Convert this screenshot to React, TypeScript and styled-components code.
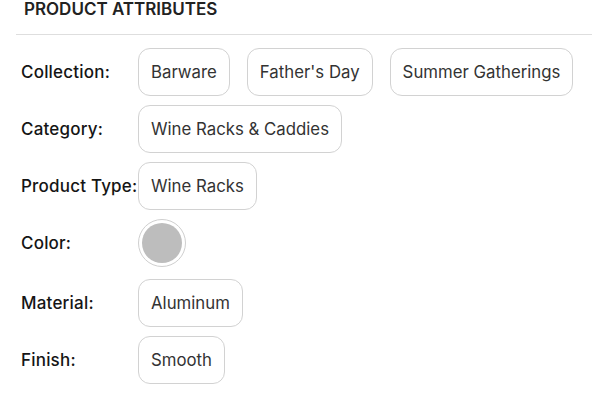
import styled, { createGlobalStyle } from "styled-components";

interface Attribute {
  label: string;
  values?: string[];
  color?: string;
}

const attributes: Attribute[] = [
  { label: "Collection:", values: ["Barware", "Father's Day", "Summer Gatherings"] },
  { label: "Category:", values: ["Wine Racks & Caddies"] },
  { label: "Product Type:", values: ["Wine Racks"] },
  { label: "Color:", color: "#bdbdbd" },
  { label: "Material:", values: ["Aluminum"] },
  { label: "Finish:", values: ["Smooth"] },
];

const GlobalStyle = createGlobalStyle`
  body {
    margin: 0;
    background: #fff;
    font-family: Inter, "Noto Sans", sans-serif;
  }
`;

const Panel = styled.section`
  padding-left: 16px;
`;

const Title = styled.h2`
  margin: 0 0 16px;
  padding-left: 8px;
  font-size: 17px;
  line-height: 18px;
  font-weight: 600;
  color: #222;
`;

const Divider = styled.hr`
  margin: 0;
  border: 0;
  border-top: 1px solid #dedede;
`;

const List = styled.div`
  display: flex;
  flex-direction: column;
  gap: 9px;
  padding-top: 13px;
`;

const Row = styled.div<{ $extra?: number }>`
  display: flex;
  align-items: center;
  margin-bottom: ${({ $extra }) => $extra ?? 0}px;
`;

const Label = styled.div`
  width: 122px;
  flex-shrink: 0;
  padding-left: 5px;
  box-sizing: border-box;
  font-size: 17px;
  font-weight: 500;
  letter-spacing: 0.2px;
  color: #151515;
  white-space: nowrap;
`;

const Chips = styled.div`
  display: flex;
  gap: 17px;
`;

const Chip = styled.span`
  display: inline-flex;
  align-items: center;
  height: 48px;
  box-sizing: border-box;
  padding: 0 12px;
  border: 1px solid #d2d2d2;
  border-radius: 12px;
  font-size: 16.8px;
  color: #333;
  white-space: nowrap;
`;

const Swatch = styled.span<{ $color: string }>`
  width: 48px;
  height: 48px;
  box-sizing: border-box;
  border: 1px solid #cfcfcf;
  border-radius: 50%;
  padding: 3px;
  display: flex;

  &::after {
    content: "";
    flex: 1;
    border-radius: 50%;
    background: ${({ $color }) => $color};
  }
`;

export default function App() {
  return (
    <>
      <GlobalStyle />
      <Panel>
        <Title>PRODUCT ATTRIBUTES</Title>
        <Divider />
        <List>
          {attributes.map((attr) => (
            <Row key={attr.label} $extra={attr.color ? 3 : 0}>
              <Label>{attr.label}</Label>
              {attr.color ? (
                <Swatch $color={attr.color} />
              ) : (
                <Chips>
                  {attr.values?.map((v) => (
                    <Chip key={v}>{v}</Chip>
                  ))}
                </Chips>
              )}
            </Row>
          ))}
        </List>
      </Panel>
    </>
  );
}
